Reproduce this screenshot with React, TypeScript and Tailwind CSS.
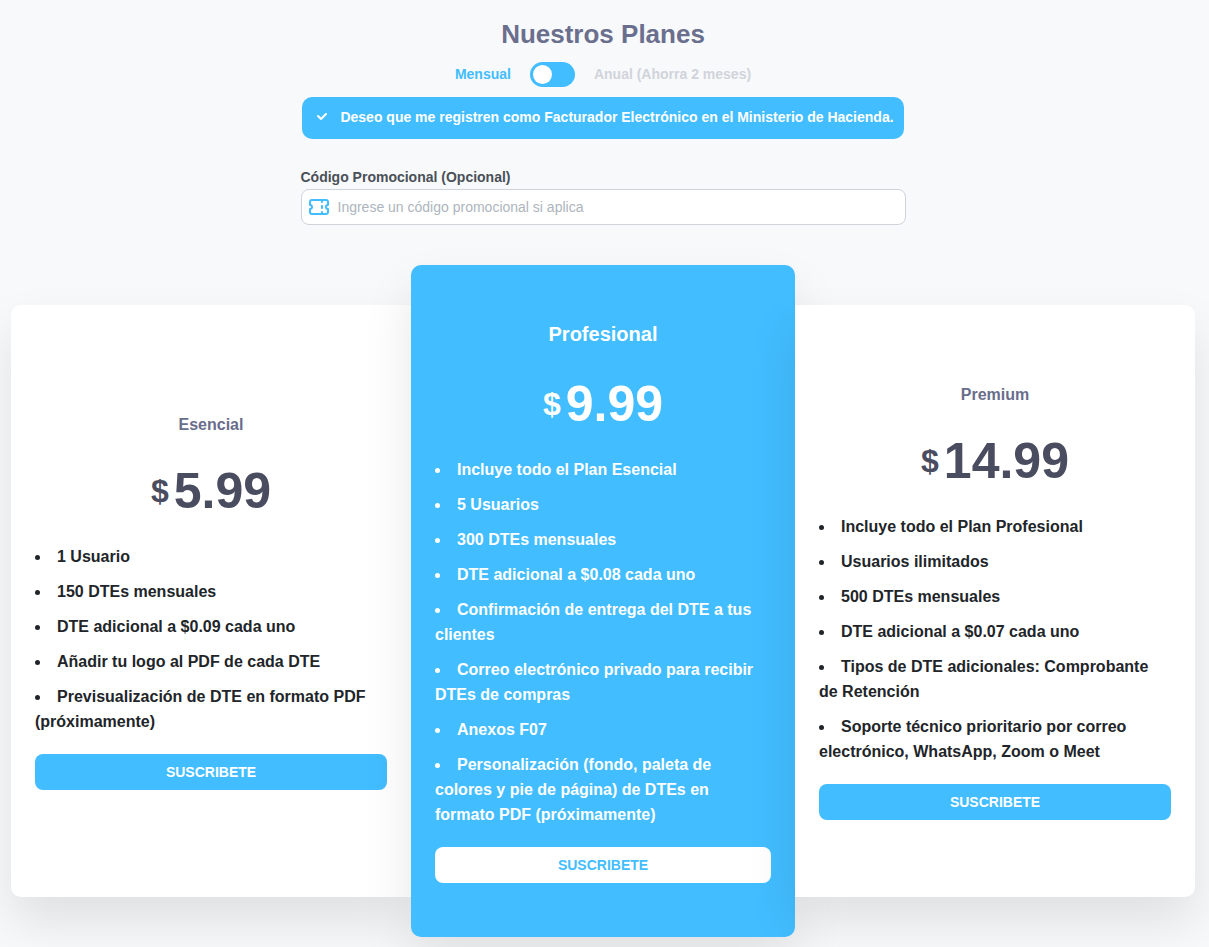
import { useState } from "react";

type Plan = {
  name: string;
  price: string;
  features: string[];
  place: "left" | "center" | "right";
};

const plans: Plan[] = [
  {
    name: "Esencial",
    price: "5.99",
    place: "left",
    features: [
      "1 Usuario",
      "150 DTEs mensuales",
      "DTE adicional a $0.09 cada uno",
      "Añadir tu logo al PDF de cada DTE",
      "Previsualización de DTE en formato PDF (próximamente)",
    ],
  },
  {
    name: "Profesional",
    price: "9.99",
    place: "center",
    features: [
      "Incluye todo el Plan Esencial",
      "5 Usuarios",
      "300 DTEs mensuales",
      "DTE adicional a $0.08 cada uno",
      "Confirmación de entrega del DTE a tus clientes",
      "Correo electrónico privado para recibir DTEs de compras",
      "Anexos F07",
      "Personalización (fondo, paleta de colores y pie de página) de DTEs en formato PDF (próximamente)",
    ],
  },
  {
    name: "Premium",
    price: "14.99",
    place: "right",
    features: [
      "Incluye todo el Plan Profesional",
      "Usuarios ilimitados",
      "500 DTEs mensuales",
      "DTE adicional a $0.07 cada uno",
      "Tipos de DTE adicionales: Comprobante de Retención",
      "Soporte técnico prioritario por correo electrónico, WhatsApp, Zoom o Meet",
    ],
  },
];

const cardShape = {
  left: "rounded-[10px] lg:rounded-r-none bg-white py-10",
  center: "rounded-[10px] bg-[#42bdff] py-[54px] lg:-my-10",
  right: "rounded-[10px] lg:rounded-l-none bg-white py-10",
};

function TicketIcon() {
  return (
    <svg
      viewBox="0 0 24 24"
      className="size-6 shrink-0 text-[#42bdff]"
      fill="none"
      stroke="currentColor"
      strokeWidth="2"
      strokeLinecap="round"
      strokeLinejoin="round"
      aria-hidden="true"
    >
      <path d="M15 5v2M15 11v2M15 17v2" />
      <path d="M5 5h14a2 2 0 0 1 2 2v3a2 2 0 0 0 0 4v3a2 2 0 0 1 -2 2h-14a2 2 0 0 1 -2 -2v-3a2 2 0 0 0 0 -4v-3a2 2 0 0 1 2 -2" />
    </svg>
  );
}

function PlanCard({ plan }: { plan: Plan }) {
  const featured = plan.place === "center";
  return (
    <article
      className={`flex flex-col justify-center px-6 shadow-[0_25px_50px_rgba(0,0,0,0.1)] ${cardShape[plan.place]}`}
    >
      <h2
        className={`text-center font-bold ${
          featured ? "text-[20px] leading-[31px] text-white" : "text-[16px] leading-[25px] text-[#696d8c]"
        }`}
      >
        {plan.name}
      </h2>
      <p
        className={`mt-[15px] mb-[14px] flex items-center justify-center gap-[5px] font-bold ${
          featured ? "text-white" : "text-[#4a4c60]"
        }`}
      >
        <span className="text-[32px] leading-[50px]">$</span>
        <span className="text-[50px] leading-[78px]">{plan.price}</span>
      </p>
      <ul
        className={`flex list-inside list-disc flex-col gap-[10px] text-[16px] leading-[25px] font-bold ${
          featured ? "text-white" : "text-[#212529]"
        }`}
      >
        {plan.features.map((feature) => (
          <li key={feature}>{feature}</li>
        ))}
      </ul>
      <button
        type="button"
        className={`mt-5 h-9 w-full cursor-pointer rounded-lg text-[14px] font-bold ${
          featured ? "bg-white text-[#42bdff]" : "bg-[#42bdff] text-white"
        }`}
      >
        SUSCRIBETE
      </button>
    </article>
  );
}

export default function App() {
  const [annual, setAnnual] = useState(false);
  const [register, setRegister] = useState(true);

  return (
    <main className="min-h-screen bg-[#f8f9fb] pt-4 pr-[14px] pb-[50px] pl-[11px] font-['Liberation_Sans',Arial,sans-serif]">
      <header className="flex flex-col items-center">
        <h1 className="text-[26px] leading-9 font-bold text-[#6b6f8e]">Nuestros Planes</h1>

        <div className="mt-[10px] flex items-center gap-[19px] text-[14px] font-bold">
          <span className={annual ? "text-[#d0d4da]" : "text-[#42bdff]"}>Mensual</span>
          <input
            type="checkbox"
            role="switch"
            aria-label="Facturación anual"
            checked={annual}
            onChange={(e) => setAnnual(e.target.checked)}
            className="flex h-[25px] w-[45px] cursor-pointer appearance-none items-center rounded-full bg-[#42bdff] px-[3px] before:size-[19px] before:rounded-full before:bg-white checked:justify-end"
          />
          <span className={annual ? "text-[#42bdff]" : "text-[#d0d4da]"}>Anual (Ahorra 2 meses)</span>
        </div>

        <label className="mt-[10px] flex cursor-pointer items-start gap-2 rounded-[10px] bg-[#42bdff] px-[10px] pt-[10px] pb-3 text-[14px] leading-5 font-bold text-white">
          <span className="grid size-5 shrink-0 place-items-center">
            <input
              type="checkbox"
              checked={register}
              onChange={(e) => setRegister(e.target.checked)}
              className="peer col-start-1 row-start-1 size-5 appearance-none rounded bg-[#42bdff]"
            />
            <svg
              viewBox="0 0 10 8"
              className="col-start-1 row-start-1 hidden w-[10px] peer-checked:block"
              fill="currentColor"
              aria-hidden="true"
            >
              <path d="M4 4.586L1.707 2.293A1 1 0 1 0 .293 3.707l3 3a.997.997 0 0 0 1.414 0l5-5A1 1 0 1 0 8.293.293L4 4.586z" />
            </svg>
          </span>
          Deseo que me registren como Facturador Electrónico en el Ministerio de Hacienda.
        </label>

        <div className="mt-[27px] w-full max-w-[605px]">
          <label htmlFor="promo" className="block text-[14px] leading-[22px] font-bold text-[#495057]">
            Código Promocional (Opcional)
          </label>
          <div className="mt-px flex h-9 items-center gap-[7px] rounded-lg border border-[#ced4da] bg-white px-[5px]">
            <TicketIcon />
            <input
              id="promo"
              type="text"
              placeholder="Ingrese un código promocional si aplica"
              className="h-full min-w-0 flex-1 bg-transparent text-[14px] text-[#212529] outline-none placeholder:text-[#adb5bd]"
            />
          </div>
        </div>
      </header>

      <section className="mt-20 grid gap-8 lg:grid-cols-[25fr_24fr_25fr] lg:gap-0">
        {plans.map((plan) => (
          <PlanCard key={plan.name} plan={plan} />
        ))}
      </section>
    </main>
  );
}
